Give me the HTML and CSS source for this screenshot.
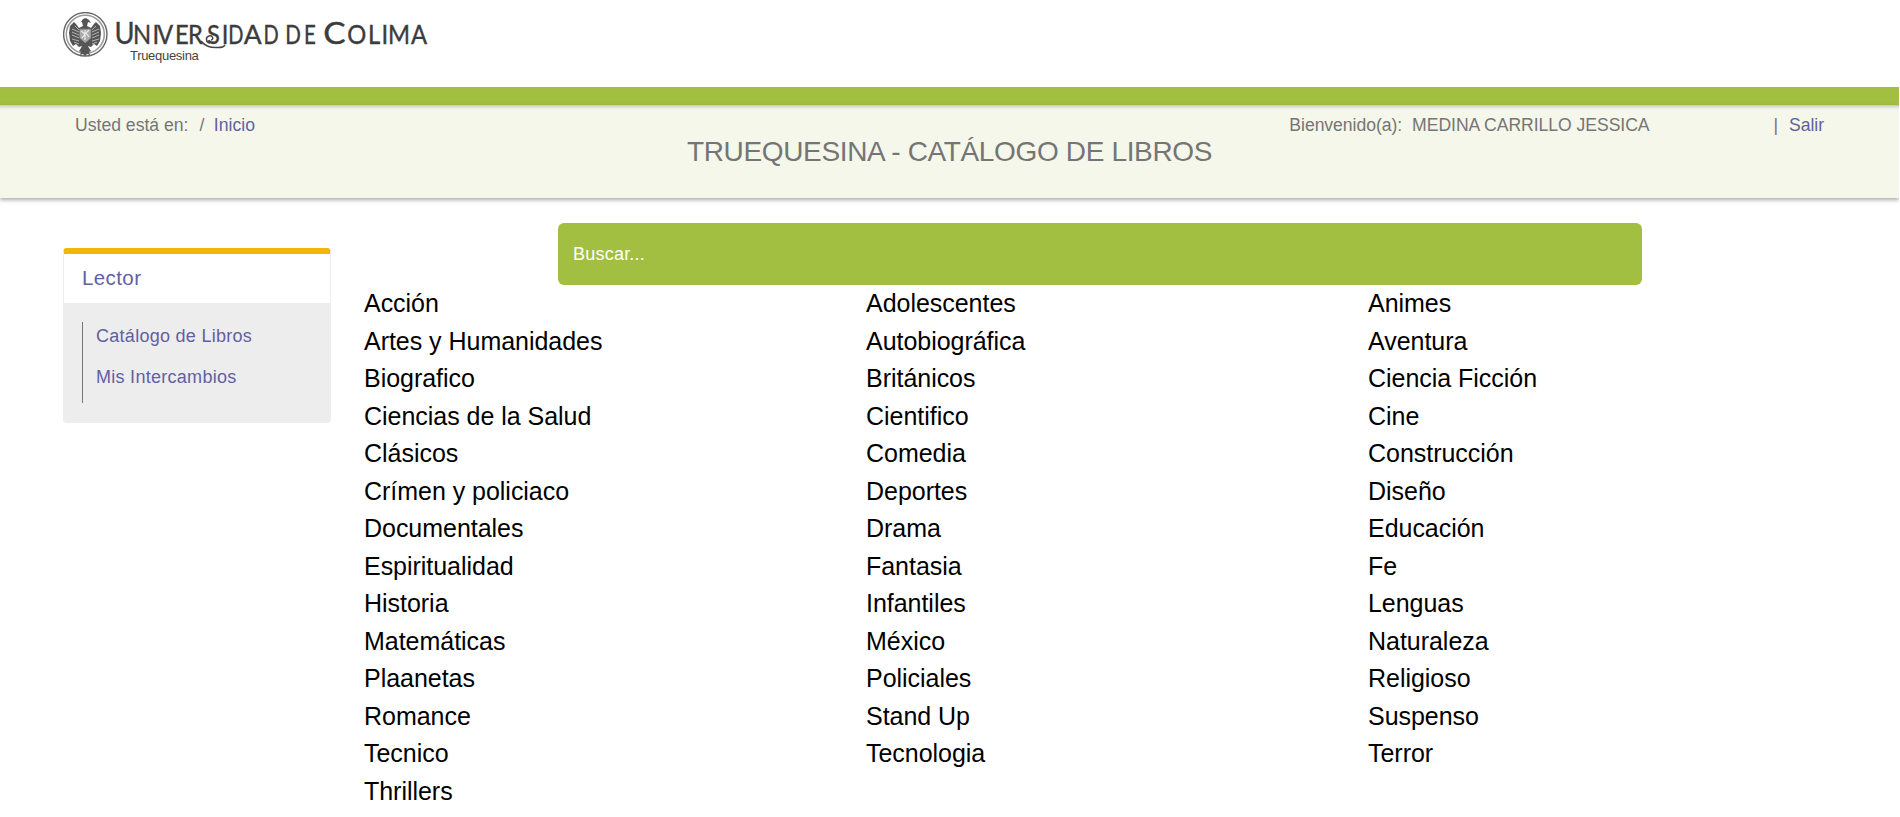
FILE: index.html
```html
<!DOCTYPE html>
<html lang="es">
<head>
<meta charset="utf-8">
<title>Truequesina</title>
<link rel="stylesheet" href="styles.css">
</head>
<body>
<header class="masthead">
  <svg class="logo" width="370" height="50" viewBox="0 0 370 50" role="img" aria-label="Universidad de Colima">
    <g fill="none">
      <circle cx="22.3" cy="22.3" r="21.7" stroke="#666" stroke-width="1.4"/>
      <circle cx="22.3" cy="22.3" r="19" stroke="#999" stroke-width="1.5"/>
    </g>
    <path fill="#555" d="M18 10l2-3 3-1 3 2 2 3-3-1-1 4 4 2 3-4 2-2 4 4 1 7-1 8-3 5-3-2-3 3-3-1 1 2 2 3-2 1 1 3-3-1-2 2-2-2-3 1 1-3-2-1 2-3 1-2-3 1-3-3-3 2-3-5-1-8 1-7 4-4 2 2 3 4 4-2-1-4z"/>
    <path fill="none" stroke="#bbb" stroke-width=".9" d="M9 17l7 3M9 20l7 3M9 23l7 3M9 27l7 2M11 30l5 2M36 17l-7 3M36 20l-7 3M36 23l-7 3M36 27l-7 2M34 30l-5 2M12 14l4 4M33 14l-4 4"/>
    <path fill="#aaa" stroke="#777" stroke-width=".7" d="M16.500 17h11.500v9l-5.700 5-5.800-5z"/>
    <path fill="none" stroke="#eee" stroke-width="1.100" d="M18 19l4 3-3 4M26 18l-3 3 3 4M22 18v10"/>
    <g class="wordmark">
      <text transform="scale(.88 1)" y="32" x="58.500 79.500 101.700 106.800 127.300 142 163.600 180.500"><tspan class="cap">U</tspan>NIVERSI</text>
      <text transform="translate(165.300 32) scale(.74 1)">D</text>
      <text transform="translate(180.800 32) scale(.98 1)">A</text>
      <text transform="translate(200.500 32) scale(.74 1)">D</text>
      <text transform="translate(222.300 32) scale(.76 1)" x="0 24.500">DE</text>
      <text class="cap" transform="scale(1.080 1)" x="241" y="32">C</text>
      <text transform="scale(.88 1)" y="32" x="323 346.600 361.900 369.300 395.500">OLIMA</text>
    </g>
    <path fill="none" stroke="#444" stroke-width="1.500" d="M138 29c4 5 10 7 17 6.500 3 0 6-1 7-2.500M147 31c-4 0-5-6-1-7 4-1 5 4 2 4"/>
  </svg>
  <div class="site">Truequesina</div>
</header>
<div class="stripe"></div>
<section class="intro">
  <div class="meta">
    <nav class="crumbs"><span>Usted está en:</span><span class="slash">/</span><a href="#">Inicio</a></nav>
    <div class="user"><span>Bienvenido(a):</span><span class="name">MEDINA CARRILLO JESSICA</span><span class="bar">|</span><a href="#">Salir</a></div>
  </div>
  <h1>TRUEQUESINA - CATÁLOGO DE LIBROS</h1>
</section>
<main class="content">
  <aside class="menu">
    <h2><a href="#">Lector</a></h2>
    <div class="menu-body">
      <ul>
        <li><a href="#">Catálogo de Libros</a></li>
        <li><a href="#">Mis Intercambios</a></li>
      </ul>
    </div>
  </aside>
  <div class="catalog">
    <input class="search" type="text" placeholder="Buscar...">
    <ul class="categories">
      <li>Acción</li><li>Adolescentes</li><li>Animes</li>
      <li>Artes y Humanidades</li><li>Autobiográfica</li><li>Aventura</li>
      <li>Biografico</li><li>Británicos</li><li>Ciencia Ficción</li>
      <li>Ciencias de la Salud</li><li>Cientifico</li><li>Cine</li>
      <li>Clásicos</li><li>Comedia</li><li>Construcción</li>
      <li>Crímen y policiaco</li><li>Deportes</li><li>Diseño</li>
      <li>Documentales</li><li>Drama</li><li>Educación</li>
      <li>Espiritualidad</li><li>Fantasia</li><li>Fe</li>
      <li>Historia</li><li>Infantiles</li><li>Lenguas</li>
      <li>Matemáticas</li><li>México</li><li>Naturaleza</li>
      <li>Plaanetas</li><li>Policiales</li><li>Religioso</li>
      <li>Romance</li><li>Stand Up</li><li>Suspenso</li>
      <li>Tecnico</li><li>Tecnologia</li><li>Terror</li>
      <li>Thrillers</li>
    </ul>
  </div>
</main>
</body>
</html>
```
FILE: styles.css
```css
* { box-sizing: border-box; }
body { margin: 0 1px 0 0; background: #fff; color: #000; font-family: "Liberation Sans", Arial, sans-serif; overflow: hidden; }
a { color: #625fa3; text-decoration: none; }
ul { list-style: none; margin: 0; padding: 0; }
.masthead { height: 87px; padding: 12px 0 0 63px; }
.logo { display: block; margin-bottom: -14px; }
.wordmark { font-family: Lato, sans-serif; font-size: 27px; fill: #3c3c3c; stroke: #3c3c3c; stroke-width: .4px; }
.wordmark .cap { font-size: 31px; }
.site { padding-left: 67px; font-size: 13px; line-height: 16px; letter-spacing: -.3px; color: #444; }
.stripe { height: 18px; background: #a2bf42; }
.intro { height: 93px; padding: 10px 75px 0 75px; background: #f5f7ea; color: #757575; box-shadow: inset 0 5px 4px -4px #0004, 0 2px 4px #0005; }
.meta { display: flex; justify-content: space-between; font-size: 17.6px; line-height: 20px; }
.crumbs, .user { display: flex; }
.crumbs a { margin-left: -1.5px; }
.user { letter-spacing: -.05px; }
.slash { margin: 0 11px; }
.name { margin-left: 10px; }
.bar { margin: 0 11px 0 124px; }
h1 { margin: 0; font-size: 28px; line-height: 34px; font-weight: 400; letter-spacing: -.35px; text-align: center; }
.content { display: flex; padding: 25px 0 0 63px; }
.menu { width: 268px; height: 175px; margin-top: 25px; border: 1px solid #ededed; border-top: 6px solid #f4b600; border-radius: 4px; overflow: hidden; flex: none; }
.menu h2 { margin: 0; height: 49px; padding: 12px 0 0 18px; font-size: 20.5px; line-height: 23px; font-weight: 400; letter-spacing: .4px; }
.menu-body { height: 120px; padding: 19px 18px; background: #ededed; }
.menu-body ul { height: 81px; padding: 4px 0 0 13px; border-left: 1px solid #777; font-size: 18px; line-height: 21px; letter-spacing: .28px; }
.menu-body li { height: 41px; }
.catalog { flex: 1; padding-left: 33px; }
.search { display: block; width: 1084px; height: 62px; margin-left: 194px; padding: 0 15px; border: 0; border-radius: 6px; background: #a2bf42; color: #fff; font: 18px "Liberation Sans", Arial, sans-serif; letter-spacing: .22px; }
.search::placeholder { color: #fff; opacity: 1; }
.categories { display: grid; grid-template-columns: repeat(3, 502px); grid-auto-rows: 37.5px; font-size: 25px; line-height: 37.5px; letter-spacing: -.03px; }
```
